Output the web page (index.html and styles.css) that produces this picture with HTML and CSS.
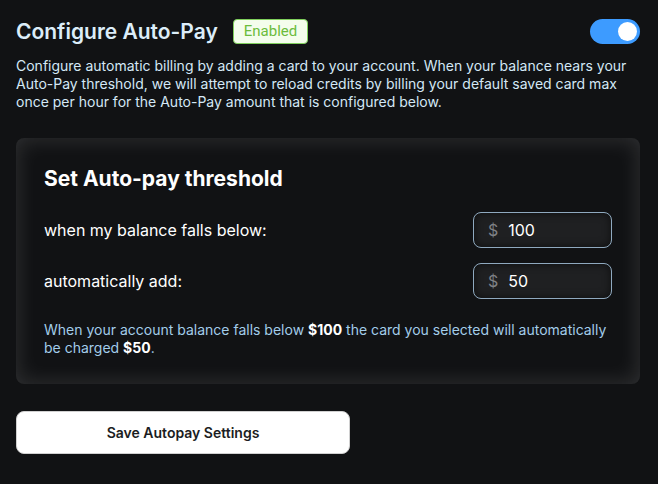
FILE: index.html
```html
<!DOCTYPE html>
<html>
<head>
<meta charset="utf-8">
<link rel="stylesheet" href="styles.css">
</head>
<body>
<div class="page">
  <div class="header">
    <h1 class="title">Configure Auto-Pay</h1>
    <span class="badge">Enabled</span>
    <span class="toggle"><span class="knob"></span></span>
  </div>
  <p class="desc">Configure automatic billing by adding a card to your account. When your balance nears your Auto-Pay threshold, we will attempt to reload credits by billing your default saved card max once per hour for the Auto-Pay amount that is configured below.</p>
  <div class="card">
    <h2 class="card-title">Set Auto-pay threshold</h2>
    <div class="row">
      <span class="label">when my balance falls below:</span>
      <div class="input"><span class="cur">$</span><span class="val">100</span></div>
    </div>
    <div class="row">
      <span class="label">automatically add:</span>
      <div class="input"><span class="cur">$</span><span class="val">50</span></div>
    </div>
    <p class="note">When your account balance falls below <b>$100</b> the card you selected will automatically be charged <b>$50</b>.</p>
  </div>
  <button class="save">Save Autopay Settings</button>
</div>
</body>
</html>
```

FILE: styles.css
```css
html, body {
  margin: 0;
  padding: 0;
  background: #111214;
}
body {
  font-family: Inter, "Noto Sans", sans-serif;
  color: #fff;
}
.page {
  padding: 16px 18px 0 16px;
}
.header {
  display: flex;
  align-items: center;
  height: 28px;
  margin-top: 1px;
}
.title {
  margin: 0;
  font-size: 21px;
  font-weight: 600;
  color: #dcedf9;
  letter-spacing: 0;
}
.badge {
  margin-left: 15px;
  height: 25px;
  padding: 0 10px;
  box-sizing: border-box;
  display: flex;
  align-items: center;
  background: #f4fdec;
  border: 1px solid #7fcf5c;
  border-radius: 4px;
  color: #6cbc3c;
  font-size: 15px;
  font-family: Roboto, sans-serif;
}
.toggle {
  margin-left: auto;
  width: 50px;
  height: 25px;
  border-radius: 13px;
  background: #3d9bff;
  display: flex;
  align-items: center;
  justify-content: flex-end;
  padding: 0 3px;
  box-sizing: border-box;
}
.knob {
  width: 19px;
  height: 19px;
  border-radius: 50%;
  background: #fff;
}
.desc {
  margin: 12px 0 0;
  font-size: 14px;
  line-height: 18px;
  color: #d4e8f6;
}
.card {
  margin-top: 27px;
  border-radius: 8px;
  background: #111214;
  box-shadow: inset 0 0 22px rgba(255,255,255,0.14);
  padding: 28px 28px 27px 28px;
}
.card-title {
  margin: 0;
  font-size: 21px;
  font-weight: 700;
  line-height: 26px;
  color: #fff;
}
.row {
  display: flex;
  align-items: center;
  justify-content: space-between;
  margin-top: 20px;
}
.row + .row {
  margin-top: 15px;
}
.label {
  font-size: 16px;
  color: #fff;
}
.input {
  width: 139px;
  height: 36px;
  box-sizing: border-box;
  border: 1px solid #8fa9bf;
  border-radius: 8px;
  background: #1f2022;
  box-shadow: inset 0 0 8px rgba(0,0,0,0.6);
  display: flex;
  align-items: center;
  padding-left: 14px;
  font-size: 16px;
}
.cur {
  color: #7e8186;
  margin-right: 10px;
}
.val {
  color: #fff;
}
.note {
  margin: 22px 0 0;
  font-size: 14px;
  line-height: 18px;
  color: #a3cdea;
}
.note b {
  color: #fff;
  font-weight: 700;
}
.save {
  display: block;
  margin-top: 27px;
  width: 334px;
  height: 43px;
  border-radius: 8px;
  border: 1px solid #d0d0d0;
  background: #fff;
  color: #1b1d22;
  font-family: Inter, sans-serif;
  font-size: 14px;
  font-weight: 600;
}
```
